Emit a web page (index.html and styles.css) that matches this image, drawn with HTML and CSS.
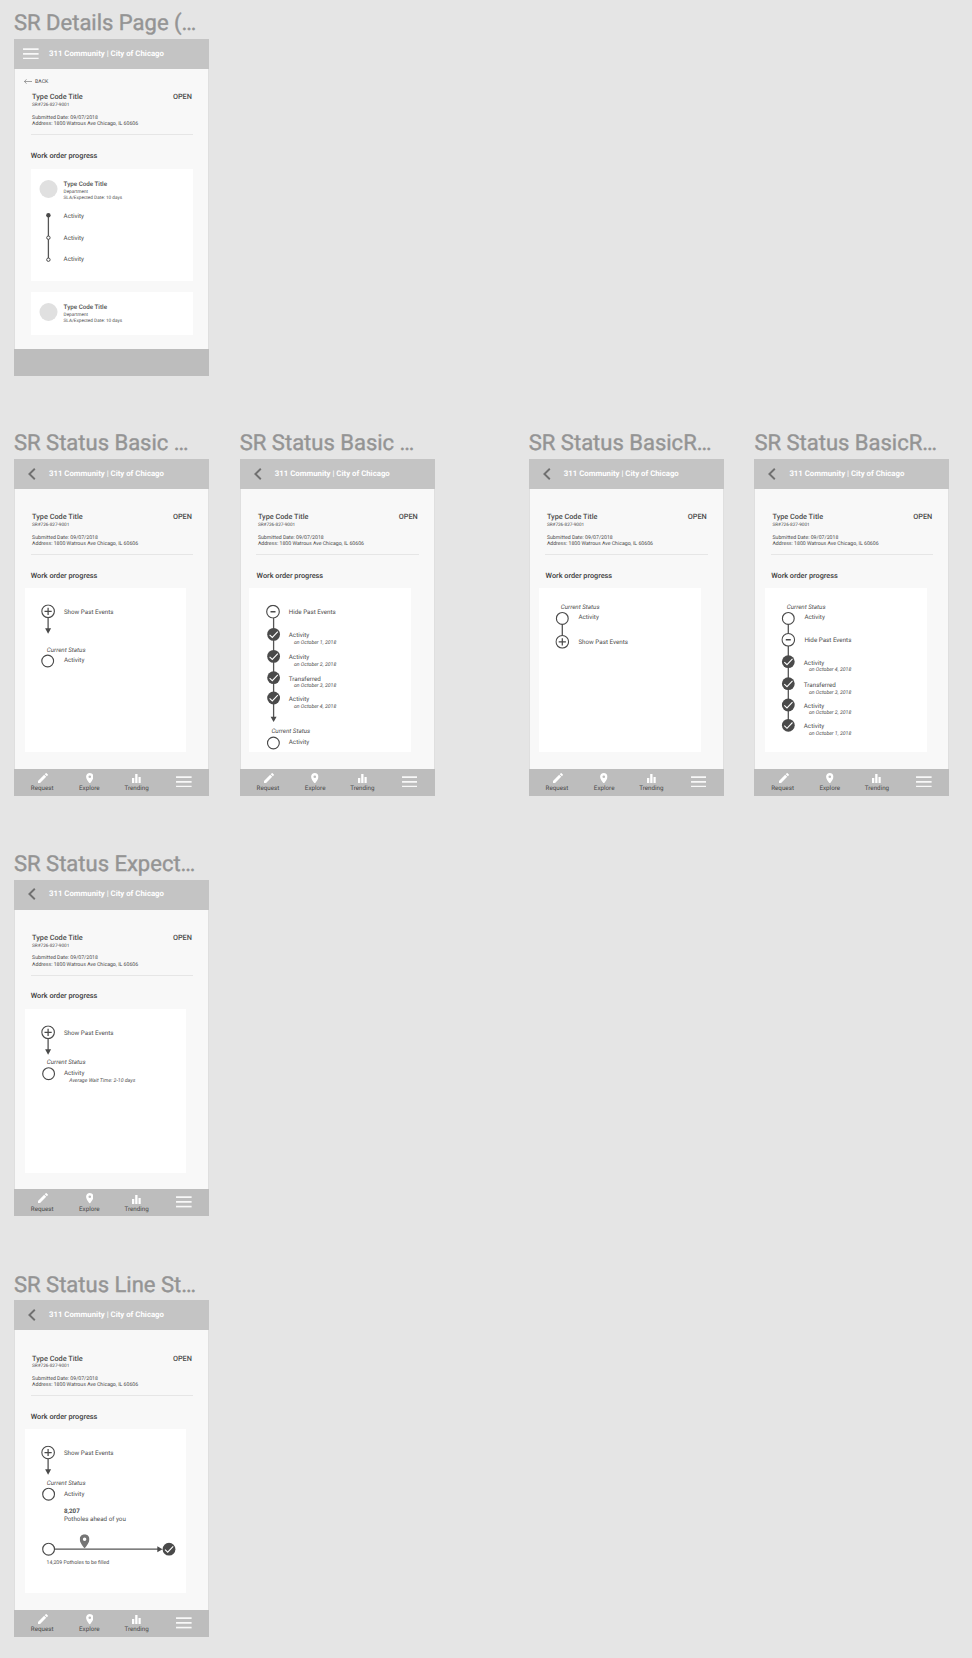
FILE: index.html
```html
<!DOCTYPE html>
<html lang="en">
<head>
<meta charset="utf-8">
<title>SR Status</title>
<link rel="stylesheet" href="styles.css">
</head>
<body>
<svg class="defs" aria-hidden="true">
  <symbol id="menu" viewBox="0 0 16 12"><path d="M0 1.2h16M0 6h16M0 10.8h16" stroke="#f8f8f8" stroke-width="1.9"/></symbol>
  <symbol id="chevron" viewBox="0 0 8 12"><path d="M6.8.7 1.4 6l5.4 5.3" fill="none" stroke="#707070" stroke-width="1.9"/></symbol>
  <symbol id="pencil" viewBox="3 3 18 18"><path fill="#fff" d="M3 17.25V21h3.75L17.81 9.94l-3.75-3.75L3 17.25zM20.71 7.04c.39-.39.39-1.02 0-1.41l-2.34-2.34c-.39-.39-1.02-.39-1.41 0l-1.83 1.83 3.75 3.75 1.83-1.83z"/></symbol>
  <symbol id="pin" viewBox="5 2 14 20"><path d="M12 2C8.13 2 5 5.13 5 9c0 5.25 7 13 7 13s7-7.75 7-13c0-3.87-3.13-7-7-7zm0 9.5a2.5 2.5 0 0 1 0-5 2.5 2.5 0 0 1 0 5z"/></symbol>
  <symbol id="bars" viewBox="0 0 9 9"><path fill="#fff" d="M0 4h2.3v5H0zM3.2 0h2.3v9H3.2zM6.5 3h2.2v6H6.5z"/></symbol>
  <symbol id="ring" viewBox="-7 -7 14 14"><circle r="5.9" fill="#fff" stroke="#4a4a4a" stroke-width="1.15"/></symbol>
  <symbol id="plus" viewBox="-7 -7 14 14"><circle r="6.3" fill="#fff" stroke="#4a4a4a" stroke-width="1.15"/><path d="M-3.6 0h7.2M0-3.6v7.2" stroke="#4a4a4a" stroke-width="1.25"/></symbol>
  <symbol id="minus" viewBox="-7 -7 14 14"><circle r="6.3" fill="#fff" stroke="#4a4a4a" stroke-width="1.15"/><path d="M-2.5 0h5" stroke="#4a4a4a" stroke-width="1.5"/></symbol>
  <symbol id="check" viewBox="-7 -7 14 14"><circle r="6.4" fill="#4a4a4a"/><path d="M-4 .4-1.3 3 4.2-2.8" fill="none" stroke="#fff" stroke-width="1.1"/></symbol>
</svg>

<main class="canvas">
  <section class="frame r1 c1">
    <h2 class="frame-title">SR Details Page (…</h2>
    <div class="screen">
      <header class="bar"><svg class="menu"><use href="#menu"/></svg><span>311 Community | City of Chicago</span></header>
      <div class="content">
        <div class="back"><svg viewBox="0 0 8 5"><path d="M2.5.3.5 2.5l2 2.2M.5 2.5H8" fill="none" stroke="#666" stroke-width=".6"/></svg>BACK</div>
        <div class="details">
          <div class="head"><b>Type Code Title</b><b>OPEN</b></div>
          <p class="sr">SR#726-827-9001</p>
          <p class="info">Submitted Date: 09/07/2018<br>Address: 1800 Watrous Ave Chicago, IL 60606</p>
        </div>
        <h3 class="progress">Work order progress</h3>
        <svg class="order tall">
          <circle cx="17.5" cy="20" r="9" fill="#e0e0e0"/>
          <text class="name" x="32.6" y="17">Type Code Title</text>
          <text class="tiny" x="32.6" y="24.3">Department</text>
          <text class="tiny" x="32.6" y="30">SLA/Expected Date: 10 days</text>
          <path class="line" d="M17.4 46v45"/>
          <circle cx="17.4" cy="46.3" r="2.2" fill="#4a4a4a"/>
          <circle class="dot" cx="17.4" cy="68.7" r="1.7"/>
          <circle class="dot" cx="17.4" cy="90.7" r="1.7"/>
          <text x="32.6" y="48.6">Activity</text>
          <text x="32.6" y="70.5">Activity</text>
          <text x="32.6" y="92.3">Activity</text>
        </svg>
        <svg class="order short">
          <circle cx="17.5" cy="20" r="9" fill="#e0e0e0"/>
          <text class="name" x="32.6" y="17">Type Code Title</text>
          <text class="tiny" x="32.6" y="24.3">Department</text>
          <text class="tiny" x="32.6" y="30">SLA/Expected Date: 10 days</text>
        </svg>
      </div>
      <footer class="tabs"></footer>
    </div>
  </section>

  <section class="frame r2 c1">
    <h2 class="frame-title">SR Status Basic …</h2>
    <div class="screen">
      <header class="bar"><svg class="chevron"><use href="#chevron"/></svg><span>311 Community | City of Chicago</span></header>
      <div class="content">
        <div class="back"></div>
        <div class="details">
          <div class="head"><b>Type Code Title</b><b>OPEN</b></div>
          <p class="sr">SR#726-827-9001</p>
          <p class="info">Submitted Date: 09/07/2018<br>Address: 1800 Watrous Ave Chicago, IL 60606</p>
        </div>
        <h3 class="progress">Work order progress</h3>
        <svg class="timeline">
          <path class="line" d="M23.1 29v13"/><path class="tip" d="M20.1 40.3h6l-3 5.4z"/>
          <use href="#plus" x="16.1" y="16.3" width="14" height="14"/>
          <use href="#ring" x="15.7" y="66" width="14" height="14"/>
          <text x="38.9" y="25.7">Show Past Events</text>
          <text class="it" x="21.8" y="63.7">Current Status</text>
          <text x="38.9" y="74.4">Activity</text>
        </svg>
      </div>
      <footer class="tabs">
        <div class="tab"><svg class="pencil"><use href="#pencil"/></svg>Request</div>
        <div class="tab"><svg class="pin"><use href="#pin"/></svg>Explore</div>
        <div class="tab"><svg class="bars"><use href="#bars"/></svg>Trending</div>
        <div class="tab more"><svg class="menu"><use href="#menu"/></svg></div>
      </footer>
    </div>
  </section>

  <section class="frame r2 c2">
    <h2 class="frame-title">SR Status Basic …</h2>
    <div class="screen">
      <header class="bar"><svg class="chevron"><use href="#chevron"/></svg><span>311 Community | City of Chicago</span></header>
      <div class="content">
        <div class="back"></div>
        <div class="details">
          <div class="head"><b>Type Code Title</b><b>OPEN</b></div>
          <p class="sr">SR#726-827-9001</p>
          <p class="info">Submitted Date: 09/07/2018<br>Address: 1800 Watrous Ave Chicago, IL 60606</p>
        </div>
        <h3 class="progress">Work order progress</h3>
        <svg class="timeline shifted">
          <path class="line" d="M24.6 29v101"/><path class="tip" d="M21.6 128.7h6l-3 5.2z"/>
          <use href="#minus" x="17" y="16.7" width="14" height="14"/>
          <use href="#check" x="17.6" y="39.4" width="14" height="14"/>
          <use href="#check" x="17.6" y="61.4" width="14" height="14"/>
          <use href="#check" x="17.6" y="82.7" width="14" height="14"/>
          <use href="#check" x="17.6" y="103" width="14" height="14"/>
          <use href="#ring" x="17.4" y="148" width="14" height="14"/>
          <text x="39.8" y="26.3">Hide Past Events</text>
          <text x="39.8" y="49.4">Activity</text><text class="date" x="44.9" y="55.8">on October 1, 2018</text>
          <text x="39.8" y="71.3">Activity</text><text class="date" x="44.9" y="78">on October 2, 2018</text>
          <text x="39.8" y="92.5">Transferred</text><text class="date" x="44.9" y="98.7">on October 3, 2018</text>
          <text x="39.8" y="112.8">Activity</text><text class="date" x="44.9" y="119.5">on October 4, 2018</text>
          <text class="it" x="22.4" y="145.4">Current Status</text>
          <text x="39.8" y="156">Activity</text>
        </svg>
      </div>
      <footer class="tabs">
        <div class="tab"><svg class="pencil"><use href="#pencil"/></svg>Request</div>
        <div class="tab"><svg class="pin"><use href="#pin"/></svg>Explore</div>
        <div class="tab"><svg class="bars"><use href="#bars"/></svg>Trending</div>
        <div class="tab more"><svg class="menu"><use href="#menu"/></svg></div>
      </footer>
    </div>
  </section>

  <section class="frame r2 c3">
    <h2 class="frame-title">SR Status BasicR…</h2>
    <div class="screen">
      <header class="bar"><svg class="chevron"><use href="#chevron"/></svg><span>311 Community | City of Chicago</span></header>
      <div class="content">
        <div class="back"></div>
        <div class="details">
          <div class="head"><b>Type Code Title</b><b>OPEN</b></div>
          <p class="sr">SR#726-827-9001</p>
          <p class="info">Submitted Date: 09/07/2018<br>Address: 1800 Watrous Ave Chicago, IL 60606</p>
        </div>
        <h3 class="progress">Work order progress</h3>
        <svg class="timeline">
          <path class="line" d="M23.3 36v12"/>
          <use href="#ring" x="16.3" y="23.4" width="14" height="14"/>
          <use href="#plus" x="16.3" y="46.8" width="14" height="14"/>
          <text class="it" x="21.8" y="21">Current Status</text>
          <text x="39.4" y="31.4">Activity</text>
          <text x="39.4" y="56.3">Show Past Events</text>
        </svg>
      </div>
      <footer class="tabs">
        <div class="tab"><svg class="pencil"><use href="#pencil"/></svg>Request</div>
        <div class="tab"><svg class="pin"><use href="#pin"/></svg>Explore</div>
        <div class="tab"><svg class="bars"><use href="#bars"/></svg>Trending</div>
        <div class="tab more"><svg class="menu"><use href="#menu"/></svg></div>
      </footer>
    </div>
  </section>

  <section class="frame r2 c4">
    <h2 class="frame-title">SR Status BasicR…</h2>
    <div class="screen">
      <header class="bar"><svg class="chevron"><use href="#chevron"/></svg><span>311 Community | City of Chicago</span></header>
      <div class="content">
        <div class="back"></div>
        <div class="details">
          <div class="head"><b>Type Code Title</b><b>OPEN</b></div>
          <p class="sr">SR#726-827-9001</p>
          <p class="info">Submitted Date: 09/07/2018<br>Address: 1800 Watrous Ave Chicago, IL 60606</p>
        </div>
        <h3 class="progress">Work order progress</h3>
        <svg class="timeline">
          <path class="line" d="M23.3 36v100"/>
          <use href="#ring" x="16.3" y="23.4" width="14" height="14"/>
          <use href="#minus" x="16.3" y="44.8" width="14" height="14"/>
          <use href="#check" x="16.3" y="66.7" width="14" height="14"/>
          <use href="#check" x="16.3" y="88.7" width="14" height="14"/>
          <use href="#check" x="16.3" y="110" width="14" height="14"/>
          <use href="#check" x="16.3" y="130.3" width="14" height="14"/>
          <text class="it" x="21.8" y="21">Current Status</text>
          <text x="39.4" y="31.4">Activity</text>
          <text x="39.4" y="53.6">Hide Past Events</text>
          <text x="38.8" y="77">Activity</text><text class="date" x="43.9" y="83.3">on October 4, 2018</text>
          <text x="38.8" y="98.9">Transferred</text><text class="date" x="43.9" y="105.7">on October 3, 2018</text>
          <text x="38.8" y="120.1">Activity</text><text class="date" x="43.9" y="126.4">on October 2, 2018</text>
          <text x="38.8" y="140.4">Activity</text><text class="date" x="43.9" y="147.1">on October 1, 2018</text>
        </svg>
      </div>
      <footer class="tabs">
        <div class="tab"><svg class="pencil"><use href="#pencil"/></svg>Request</div>
        <div class="tab"><svg class="pin"><use href="#pin"/></svg>Explore</div>
        <div class="tab"><svg class="bars"><use href="#bars"/></svg>Trending</div>
        <div class="tab more"><svg class="menu"><use href="#menu"/></svg></div>
      </footer>
    </div>
  </section>

  <section class="frame r3 c1">
    <h2 class="frame-title">SR Status Expect…</h2>
    <div class="screen">
      <header class="bar"><svg class="chevron"><use href="#chevron"/></svg><span>311 Community | City of Chicago</span></header>
      <div class="content">
        <div class="back"></div>
        <div class="details">
          <div class="head"><b>Type Code Title</b><b>OPEN</b></div>
          <p class="sr">SR#726-827-9001</p>
          <p class="info">Submitted Date: 09/07/2018<br>Address: 1800 Watrous Ave Chicago, IL 60606</p>
        </div>
        <h3 class="progress">Work order progress</h3>
        <svg class="timeline">
          <path class="line" d="M23.1 29v13"/><path class="tip" d="M20.1 40.3h6l-3 5.4z"/>
          <use href="#plus" x="16.1" y="16.3" width="14" height="14"/>
          <use href="#ring" x="16.6" y="57.7" width="14" height="14"/>
          <text x="38.9" y="25.8">Show Past Events</text>
          <text class="it" x="21.8" y="55">Current Status</text>
          <text x="38.9" y="65.6">Activity</text>
          <text class="date" x="44.3" y="73.1">Average Wait Time: 2-10 days</text>
        </svg>
      </div>
      <footer class="tabs">
        <div class="tab"><svg class="pencil"><use href="#pencil"/></svg>Request</div>
        <div class="tab"><svg class="pin"><use href="#pin"/></svg>Explore</div>
        <div class="tab"><svg class="bars"><use href="#bars"/></svg>Trending</div>
        <div class="tab more"><svg class="menu"><use href="#menu"/></svg></div>
      </footer>
    </div>
  </section>

  <section class="frame r4 c1">
    <h2 class="frame-title">SR Status Line St…</h2>
    <div class="screen">
      <header class="bar"><svg class="chevron"><use href="#chevron"/></svg><span>311 Community | City of Chicago</span></header>
      <div class="content">
        <div class="back"></div>
        <div class="details">
          <div class="head"><b>Type Code Title</b><b>OPEN</b></div>
          <p class="sr">SR#726-827-9001</p>
          <p class="info">Submitted Date: 09/07/2018<br>Address: 1800 Watrous Ave Chicago, IL 60606</p>
        </div>
        <h3 class="progress">Work order progress</h3>
        <svg class="timeline">
          <path class="line" d="M23.1 29v13"/><path class="tip" d="M20.1 40.3h6l-3 5.4z"/>
          <use href="#plus" x="16.1" y="16.5" width="14" height="14"/>
          <use href="#ring" x="16.6" y="58.2" width="14" height="14"/>
          <text x="38.9" y="26.2">Show Past Events</text>
          <text class="it" x="21.8" y="55.5">Current Status</text>
          <text x="38.9" y="66.5">Activity</text>
          <text class="count" x="38.9" y="84.3">8,207</text>
          <text x="38.9" y="91.6">Potholes ahead of you</text>
          <path class="line" d="M29 120.2h105"/><path class="tip" d="M132.3 117.2v6l5.2-3z"/>
          <use href="#ring" x="16.6" y="113.2" width="14" height="14"/>
          <use href="#check" x="137" y="113.2" width="14" height="14"/>
          <use href="#pin" x="54.7" y="105.3" width="9.8" height="14" fill="#757575"/>
          <text class="small" x="21.6" y="135.3">14,209 Potholes to be filled</text>
        </svg>
      </div>
      <footer class="tabs">
        <div class="tab"><svg class="pencil"><use href="#pencil"/></svg>Request</div>
        <div class="tab"><svg class="pin"><use href="#pin"/></svg>Explore</div>
        <div class="tab"><svg class="bars"><use href="#bars"/></svg>Trending</div>
        <div class="tab more"><svg class="menu"><use href="#menu"/></svg></div>
      </footer>
    </div>
  </section>
</main>
</body>
</html>
```
FILE: styles.css
```css
* { box-sizing: border-box; margin: 0; padding: 0; }
body {
  background: #e5e5e5;
  font-family: Roboto, sans-serif;
  color: #4a4a4a;
  text-rendering: geometricPrecision;
}
svg { display: block; flex: none; }
.defs { position: absolute; width: 0; height: 0; }
.canvas { position: relative; width: 972px; height: 1658px; overflow: hidden; }

/* artboards placed on the canvas */
.frame { position: absolute; width: 195px; }
.c1 { left: 14px; }
.c2 { left: 239.8px; }
.c3 { left: 528.8px; }
.c4 { left: 754.4px; }
.r1 { top: 10.5px; }
.r2 { top: 430.5px; }
.r3 { top: 851.2px; }
.r4 { top: 1271.8px; }

.frame-title {
  height: 28.5px;
  padding-top: 0.8px;
  font-size: 22px;
  line-height: 26px;
  font-weight: 400;
  color: #949494;
  -webkit-text-stroke: 0.4px #949494;
  white-space: nowrap;
}
.screen { height: 336.8px; display: flex; flex-direction: column; }

.bar {
  height: 30px;
  flex: none;
  display: flex;
  align-items: center;
  background: #c4c4c4;
  color: #fff;
  font-size: 7.8px;
  font-weight: 700;
}
.bar span { padding-bottom: 1.4px; white-space: nowrap; }
.menu { width: 15.8px; height: 11.8px; }
.bar .menu { margin: 0 10.2px 1px 9px; }
.chevron { width: 8px; height: 12px; margin: 0 13.2px 1px 13.8px; }

.content {
  flex: 1;
  min-height: 0;
  background: #f8f8f8;
  border: solid #dfdfdf;
  border-width: 0 1px;
}
.back {
  height: 25px;
  padding: 7.5px 0 0 8.9px;
  display: flex;
  align-items: flex-start;
  gap: 3.2px;
  font-size: 5.2px;
  line-height: 10px;
}
.back svg { width: 8px; height: 5px; margin-top: 2.6px; }
.details {
  height: 41px;
  margin: 0 15.3px 0 15.7px;
  padding: 0 0 0 1.4px;
  border-bottom: 1px solid #e6e6e6;
}
.head {
  display: flex;
  justify-content: space-between;
  padding: 0.4px 0.8px 0 0;
  font-size: 7.3px;
  line-height: 6px;
}
.head b { font-weight: 500; }
.sr { font-size: 4.68px; line-height: 6px; margin-top: 2.8px; }
.info { font-size: 5.2px; line-height: 6.3px; margin-top: 5.4px; white-space: nowrap; }
.progress {
  height: 33px;
  padding: 14.5px 0 0 15.8px;
  font-size: 7.3px;
  line-height: 12px;
  font-weight: 500;
  color: #3c3c3c;
}

.timeline, .order { background: #fff; font-size: 6.25px; fill: none; }
.timeline { width: 161.6px; height: 164px; margin-left: 9.7px; }
.timeline.shifted { margin-left: 8.7px; }
.order { width: 162px; margin-left: 16px; }
.order.tall { height: 112.3px; margin-top: 1px; }
.order.short { height: 43.3px; margin-top: 10.7px; }
text { fill: #4f4f4f; }
.name { font-weight: 500; }
.tiny { font-size: 4.68px; }
.small { font-size: 5.2px; }
.it { font-style: italic; }
.date { font-size: 5.2px; font-style: italic; }
.count { font-weight: 700; }
.line { stroke: #555; stroke-width: 1.3; }
.tip { fill: #4a4a4a; }
.dot { fill: #fff; stroke: #4a4a4a; stroke-width: 1; }

.tabs {
  height: 27.3px;
  flex: none;
  display: grid;
  grid-template-columns: repeat(4, 47.2px);
  padding-left: 4.6px;
  background: #bdbdbd;
  font-size: 6.25px;
}
.tab { display: flex; flex-direction: column; align-items: center; padding-top: 4.2px; line-height: 8px; }
.tab.more { padding-top: 7.2px; }
.pencil { width: 10px; height: 10px; margin: 0 0 1.2px 2.6px; }
.pin { width: 7.6px; height: 10.6px; margin-bottom: 0.6px; fill: #fff; }
.bars { width: 9px; height: 9px; margin-top: 1.2px; margin-bottom: 1px; }
```
